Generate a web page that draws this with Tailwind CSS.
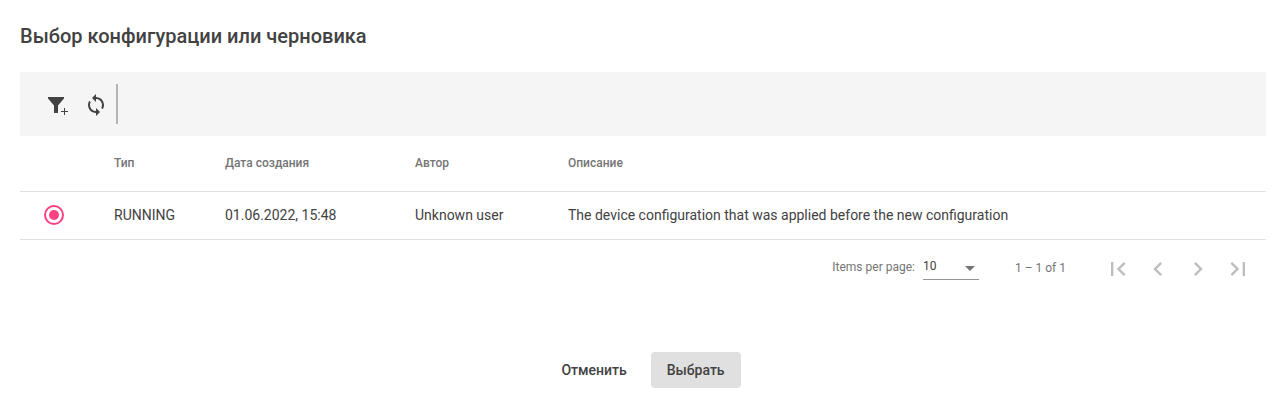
<!DOCTYPE html>
<html lang="ru">
<head>
    <meta charset="UTF-8">
    <meta name="viewport" content="width=device-width, initial-scale=1.0">
    <title>Выбор конфигурации или черновика</title>
    <script src="https://cdn.jsdelivr.net/npm/@tailwindcss/browser@4"></script>
</head>
<body class="bg-white font-[Roboto,sans-serif] text-sm text-[#424242]">
    <main class="pt-5 pr-[19px] pb-3 pl-5">
        <h1 class="text-xl leading-8 font-medium">Выбор конфигурации или черновика</h1>

        <!-- Toolbar -->
        <div class="mt-5 flex h-16 items-center bg-[#f5f5f5] pl-[18px]">
            <button type="button" aria-label="Добавить фильтр" class="flex size-10 items-center justify-center pt-0.5">
                <svg class="size-6" viewBox="0 0 24 24" fill="currentColor">
                    <path d="M2 4h16v1.500l-6 7V20H8v-7.500l-6-7z"/>
                    <path d="M18 15h1v3h3v1h-3v3h-1v-3h-3v-1h3z"/>
                </svg>
            </button>
            <button type="button" aria-label="Обновить" class="flex h-10 w-9 items-center justify-center pt-0.5">
                <svg class="size-6" viewBox="0 0 24 24" fill="currentColor">
                    <path d="M12 4V1L8 5l4 4V6c3.310 0 6 2.690 6 6 0 1.010-.25 1.970-.7 2.800l1.460 1.460C19.540 15.030 20 13.570 20 12c0-4.420-3.580-8-8-8zm0 14c-3.310 0-6-2.690-6-6 0-1.010.25-1.970.7-2.800L5.240 7.740C4.460 8.970 4 10.430 4 12c0 4.420 3.580 8 8 8v3l4-4-4-4v3z"/>
                </svg>
            </button>
            <div class="ml-0.5 h-10 w-0.5 bg-[#b3b3b3]"></div>
        </div>

        <table class="w-full table-fixed text-left">
            <colgroup>
                <col class="w-[94px]">
                <col class="w-[111px]">
                <col class="w-[190px]">
                <col class="w-[153px]">
                <col>
            </colgroup>
            <thead>
                <tr class="h-[55px] border-b border-[#e0e0e0] text-xs text-[#757575]">
                    <td></td>
                    <th scope="col" class="font-medium">Тип</th>
                    <th scope="col" class="font-medium">Дата создания</th>
                    <th scope="col" class="font-medium">Автор</th>
                    <th scope="col" class="font-medium">Описание</th>
                </tr>
            </thead>
            <tbody>
                <tr class="h-12 border-b border-[#e0e0e0]">
                    <td class="pl-6">
                        <input type="radio" name="config" checked aria-label="RUNNING" class="block size-5 appearance-none rounded-full border-2 border-[#757575] bg-clip-content p-[3px] checked:border-[#ff4081] checked:bg-[#ff4081]">
                    </td>
                    <td>RUNNING</td>
                    <td>01.06.2022, 15:48</td>
                    <td>Unknown user</td>
                    <td>The device configuration that was applied before the new configuration</td>
                </tr>
            </tbody>
        </table>

        <!-- Paginator -->
        <div class="flex h-14 items-center justify-end pr-2 text-xs text-[#757575]">
            <label for="pageSize" class="mr-2 mb-0.5">Items per page:</label>
            <div class="relative w-14">
                <select id="pageSize" class="block h-6 w-full appearance-none border-b border-[#949494] pb-0.5 text-[#424242]">
                    <option>10</option>
                    <option>25</option>
                    <option>50</option>
                </select>
                <svg class="pointer-events-none absolute top-2.5 right-1 h-[5px] w-2.5" viewBox="0 0 10 5" fill="currentColor">
                    <path d="M0 0h10L5 5z"/>
                </svg>
            </div>
            <span class="mr-8 ml-9">1 – 1 of 1</span>
            <div class="mt-0.5 flex text-[#bdbdbd]">
                <button type="button" disabled aria-label="First page" class="flex size-10 items-center justify-center">
                    <svg class="size-7" viewBox="0 0 24 24" fill="currentColor"><path d="M18.410 16.590L13.820 12l4.590-4.590L17 6l-6 6 6 6zM6 6h2v12H6z"/></svg>
                </button>
                <button type="button" disabled aria-label="Previous page" class="flex size-10 items-center justify-center">
                    <svg class="size-7" viewBox="0 0 24 24" fill="currentColor"><path d="M15.410 7.410L14 6l-6 6 6 6 1.410-1.410L10.830 12z"/></svg>
                </button>
                <button type="button" disabled aria-label="Next page" class="flex size-10 items-center justify-center">
                    <svg class="size-7" viewBox="0 0 24 24" fill="currentColor"><path d="M10 6L8.590 7.410 13.170 12l-4.580 4.590L10 18l6-6z"/></svg>
                </button>
                <button type="button" disabled aria-label="Last page" class="flex size-10 items-center justify-center">
                    <svg class="size-7" viewBox="0 0 24 24" fill="currentColor"><path d="M5.590 7.410L10.180 12l-4.590 4.590L7 18l6-6-6-6zM16 6h2v12h-2z"/></svg>
                </button>
            </div>
        </div>

        <div class="mt-14 flex justify-center gap-2">
            <button type="button" class="h-9 rounded px-4 font-medium">Отменить</button>
            <button type="button" class="h-9 rounded bg-[#e0e0e0] px-4 font-medium">Выбрать</button>
        </div>
    </main>
</body>
</html>
